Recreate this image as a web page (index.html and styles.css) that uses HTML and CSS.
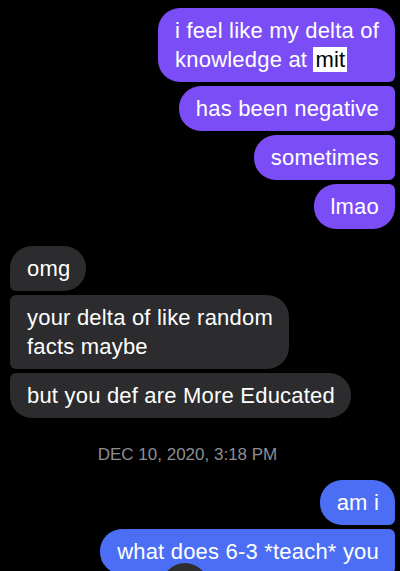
FILE: index.html
```html
<!DOCTYPE html>
<html lang="en">

<head>
    <meta charset="UTF-8">
    <meta name="viewport" content="width=device-width, initial-scale=1.0">
    <title>Messages</title>
    <link rel="stylesheet" href="styles.css">
</head>

<body>
    <div class="thread">
        <div class="group sent purple">
            <div class="bubble first">i feel like my delta of<br>knowledge at <span class="selected">mit</span></div>
            <div class="bubble">has been negative</div>
            <div class="bubble">sometimes</div>
            <div class="bubble last">lmao</div>
        </div>

        <div class="group received">
            <div class="bubble first">omg</div>
            <div class="bubble">your delta of like random<br>facts maybe</div>
            <div class="bubble last">but you def are More Educated</div>
        </div>

        <div class="timestamp">DEC 10, 2020, 3:18 PM</div>

        <div class="group sent blue">
            <div class="bubble first">am i</div>
            <div class="bubble">what does 6-3 *teach* you</div>
        </div>
    </div>

    <div class="scroll-btn"></div>
</body>

</html>
```

FILE: styles.css
```css
body {
    margin: 0;
    background-color: #000;
    font-family: "Liberation Sans", Arial, sans-serif;
    color: #fff;
    overflow: hidden;
    height: 571px;
    position: relative;
}

.thread {
    padding: 8px 5px 0 10px;
}

.group {
    display: flex;
    flex-direction: column;
    gap: 4px;
}

.sent {
    align-items: flex-end;
}

.received {
    align-items: flex-start;
    margin-top: 17px;
}

.bubble {
    font-size: 22px;
    line-height: 29px;
    letter-spacing: 0.2px;
    padding: 8px 16px 8px 17px;
    border-radius: 22px;
}

.sent .bubble {
    border-top-right-radius: 6px;
    border-bottom-right-radius: 6px;
}

.sent .bubble.first {
    border-top-right-radius: 22px;
}

.sent .bubble.last {
    border-bottom-right-radius: 22px;
}

.received .bubble {
    background-color: #2c2c2e;
    border-top-left-radius: 6px;
    border-bottom-left-radius: 6px;
}

.received .bubble.first {
    border-top-left-radius: 22px;
}

.received .bubble.last {
    border-bottom-left-radius: 22px;
}

.purple .bubble {
    background-color: #7b4df6;
}

.blue .bubble {
    background-color: #4c6ef5;
}

.selected {
    background: #fff;
    color: #000;
    padding: 0 2px;
}

.timestamp {
    text-align: center;
    color: #8e8e93;
    font-size: 17px;
    line-height: 18px;
    margin: 28px 30px 16px 0;
}

.scroll-btn {
    position: absolute;
    left: 162px;
    top: 563px;
    width: 46px;
    height: 46px;
    border-radius: 50%;
    background-color: #2e2e2e;
}
```
